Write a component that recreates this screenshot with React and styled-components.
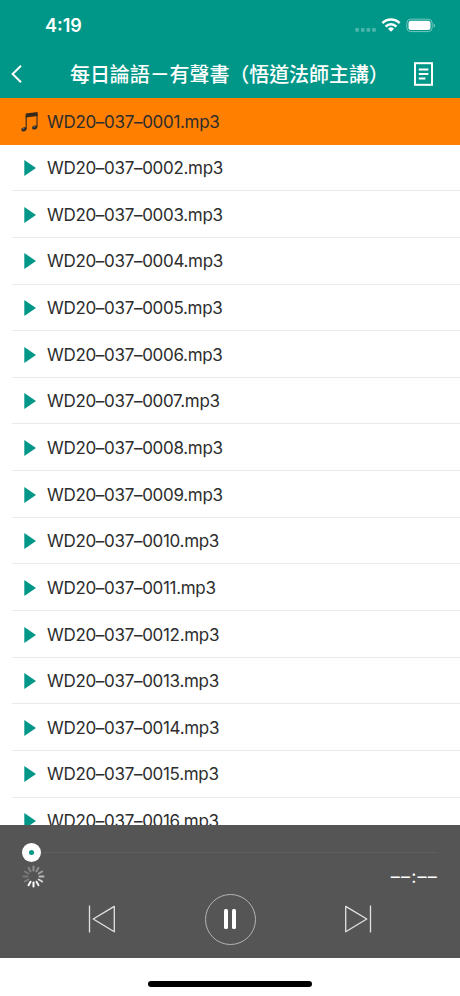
import React from "react";
import styled, { createGlobalStyle } from "styled-components";

const colors = {
    primary: "#009788",
    active: "#ff8000",
    text: "#2d2d2d",
    line: "#e9e9e9",
    player: "#555555",
};

const GlobalStyle = createGlobalStyle`
    * {
        box-sizing: border-box;
    }

    body {
        margin: 0;
        background: #ffffff;
        font-family: Inter, "Noto Sans CJK TC", sans-serif;
    }
`;

const Screen = styled.div`
    display: flex;
    flex-direction: column;
    width: 460px;
    height: 996px;
    overflow: hidden;
    background: #ffffff;
`;

const Header = styled.header`
    flex: none;
    height: 98px;
    color: #ffffff;
    background: ${colors.primary};
`;

const StatusBar = styled.div`
    display: flex;
    align-items: center;
    justify-content: space-between;
    height: 50px;
    padding: 0 24px 0 45px;
`;

const Time = styled.span`
    font-size: 18px;
    font-weight: 600;
    line-height: 20px;
    padding-top: 1px;
`;

const StatusIcons = styled.svg`
    display: block;
    width: 82px;
    height: 16px;
`;

const NavBar = styled.div`
    display: flex;
    align-items: center;
    height: 48px;
    padding: 0 26px 0 10px;
`;

const IconButton = styled.button`
    display: flex;
    padding: 0;
    border: 0;
    color: inherit;
    background: none;

    svg {
        display: block;
    }
`;

const Title = styled.h1`
    flex: 1;
    margin: 0 0 0 47px;
    font-family: "Noto Sans CJK TC", sans-serif;
    font-size: 20px;
    font-weight: 500;
    line-height: 28px;
    letter-spacing: -0.08px;
    white-space: nowrap;
`;

const TrackList = styled.ul`
    flex: 1;
    min-height: 0;
    margin: 0;
    padding: 0;
    overflow: hidden;
    list-style: none;
`;

const Track = styled.li`
    display: flex;
    height: 46.65px;
    padding-left: 12px;
    color: ${colors.text};
    background: ${(props) => (props.$active ? colors.active : "transparent")};
`;

const TrackBody = styled.div`
    display: flex;
    flex: 1;
    align-items: center;
    padding-top: 1.4px;
    border-bottom: 1px solid ${(props) => (props.$active ? "transparent" : colors.line)};
`;

const TrackIcon = styled.span`
    display: flex;
    justify-content: center;
    width: 35px;

    svg {
        display: block;
    }
`;

const TrackName = styled.span`
    font-size: 17px;
    line-height: 22px;
    letter-spacing: -0.31px;
    white-space: nowrap;
`;

const Player = styled.section`
    flex: none;
    height: 133px;
    padding: 18px 22px 0;
    color: #ffffff;
    background: ${colors.player};
`;

const Slider = styled.div`
    display: flex;
    align-items: center;
    height: 19px;
`;

const Thumb = styled.span`
    display: flex;
    align-items: center;
    justify-content: center;
    width: 19px;
    height: 19px;
    border-radius: 50%;
    background: #ffffff;

    &::after {
        content: "";
        width: 5px;
        height: 5px;
        border-radius: 50%;
        background: ${colors.primary};
    }
`;

const Rail = styled.span`
    flex: 1;
    height: 1px;
    background: #5e5e5e;
`;

const TimeRow = styled.div`
    display: flex;
    align-items: center;
    justify-content: space-between;
    height: 29px;

    svg {
        display: block;
    }
`;

const Remaining = styled.span`
    font-size: 18px;
    font-weight: 400;
    line-height: 20px;
    letter-spacing: 1.2px;
    font-feature-settings: "calt" 0;
`;

const Controls = styled.div`
    display: flex;
    align-items: center;
    justify-content: space-between;
    height: 52px;
    margin: 2px 65px 0 65px;
`;

const PauseButton = styled(IconButton)`
    align-items: center;
    justify-content: center;
    gap: 4px;
    width: 51px;
    height: 51px;
    border: 1.3px solid #b4b4b4;
    border-radius: 50%;
`;

const PauseBar = styled.span`
    width: 4px;
    height: 20px;
    border-radius: 1.5px;
    background: #ffffff;
`;

const HomeArea = styled.footer`
    display: flex;
    flex: none;
    align-items: flex-end;
    justify-content: center;
    height: 38px;
    padding-bottom: 9px;
`;

const HomeIndicator = styled.span`
    width: 164px;
    height: 6px;
    border-radius: 3px;
    background: #000000;
`;

const tracks = Array.from({ length: 16 }, (_, i) => `WD20–037–${String(i + 1).padStart(4, "0")}.mp3`);

const spokes = [0.34, 0.34, 0.45, 0.6, 0.75, 0.9, 1, 1, 0.24, 0.2, 0.22, 0.28];

const StatusGlyphs = () => (
    <StatusIcons viewBox="0 0 82 16" fill="none">
        {[1.3, 7, 12.6, 18.2].map((x) => (
            <rect key={x} x={x} y="11" width="3.6" height="3.8" rx="0.8" fill="#fff" opacity="0.3" />
        ))}
        <g stroke="#fff" strokeWidth="2.5">
            <path d="M28.4 6.1a12 12 0 0 1 17.2 0" />
            <path d="M31.6 9.6a7.6 7.6 0 0 1 10.8 0" />
        </g>
        <path d="M34 11.7a4.3 4.3 0 0 1 6 0l-3 3.1Z" fill="#fff" />
        <rect x="52.8" y="2.2" width="25.4" height="12.4" rx="4" stroke="#fff" opacity="0.45" />
        <rect x="54.5" y="3.8" width="22" height="9.2" rx="2.5" fill="#fff" />
        <path d="M79.7 6.4v4.3a2.4 2.4 0 0 0 0-4.3Z" fill="#fff" opacity="0.5" />
    </StatusIcons>
);

const NoteIcon = () => (
    <svg width="20" height="22" viewBox="0 0 20 22">
        <path d="M5.7 2.6 17.6 1v3.9L5.7 6.5Z" fill="#35291d" />
        <path d="M6.2 4.5v13.4M17 3v13" fill="none" stroke="#35291d" strokeWidth="1.1" />
        <ellipse cx="3.9" cy="18.4" rx="2.7" ry="2" fill="#29292a" transform="rotate(-15 3.9 18.4)" />
        <ellipse cx="14.7" cy="16.5" rx="2.7" ry="2" fill="#29292a" transform="rotate(-15 14.7 16.5)" />
        <ellipse cx="3.4" cy="17.8" rx="1.1" ry="0.6" fill="#78828a" />
        <ellipse cx="14.2" cy="15.8" rx="1.1" ry="0.6" fill="#78828a" />
    </svg>
);

const PlayIcon = () => (
    <svg width="12" height="16" viewBox="0 0 12 16">
        <path d="M.3 0 12.1 8 .3 16Z" fill={colors.primary} />
    </svg>
);

const Spinner = () => (
    <svg width="23" height="23" viewBox="-11.5 -11.5 23 23">
        {spokes.map((opacity, i) => (
            <line
                key={i}
                y1="-6"
                y2="-10"
                stroke="#fff"
                strokeWidth="2"
                strokeLinecap="round"
                opacity={opacity}
                transform={`rotate(${i * 30})`}
            />
        ))}
    </svg>
);

const SkipIcon = ({ next }) => (
    <svg width="28" height="28" viewBox="0 0 28 28" fill="none" stroke="#e2e2e2" strokeWidth="1.3">
        <g transform={next ? "matrix(-1 0 0 1 28 0)" : undefined}>
            <path d="M2.5 .5v27" />
            <path d="M27.3 1.4v25.4L6.2 14Z" strokeLinejoin="round" />
        </g>
    </svg>
);

const App = () => {
    return (
        <Screen>
            <GlobalStyle />
            <Header>
                <StatusBar>
                    <Time>4:19</Time>
                    <StatusGlyphs />
                </StatusBar>
                <NavBar>
                    <IconButton aria-label="返回">
                        <svg width="13" height="20" viewBox="0 0 13 20" fill="none" stroke="#fff" strokeWidth="2">
                            <path d="M11 1.8 2.6 10l8.4 8.2" />
                        </svg>
                    </IconButton>
                    <Title>每日論語－有聲書（悟道法師主講）</Title>
                    <IconButton aria-label="講義">
                        <svg width="20" height="24" viewBox="0 0 20 24" fill="none" stroke="#fff" strokeWidth="2">
                            <rect x="1" y="1.2" width="17" height="21.6" />
                            <path d="M4.8 7.4h9.6M4.8 12h9.6M4.8 16.6h6.6" />
                        </svg>
                    </IconButton>
                </NavBar>
            </Header>
            <TrackList>
                {tracks.map((name, i) => (
                    <Track key={name} $active={i === 0}>
                        <TrackBody $active={i === 0}>
                            <TrackIcon>{i === 0 ? <NoteIcon /> : <PlayIcon />}</TrackIcon>
                            <TrackName>{name}</TrackName>
                        </TrackBody>
                    </Track>
                ))}
            </TrackList>
            <Player>
                <Slider>
                    <Thumb />
                    <Rail />
                </Slider>
                <TimeRow>
                    <Spinner />
                    <Remaining>––:––</Remaining>
                </TimeRow>
                <Controls>
                    <IconButton aria-label="上一首">
                        <SkipIcon />
                    </IconButton>
                    <PauseButton aria-label="暫停">
                        <PauseBar />
                        <PauseBar />
                    </PauseButton>
                    <IconButton aria-label="下一首">
                        <SkipIcon next />
                    </IconButton>
                </Controls>
            </Player>
            <HomeArea>
                <HomeIndicator />
            </HomeArea>
        </Screen>
    );
};

export default App;
